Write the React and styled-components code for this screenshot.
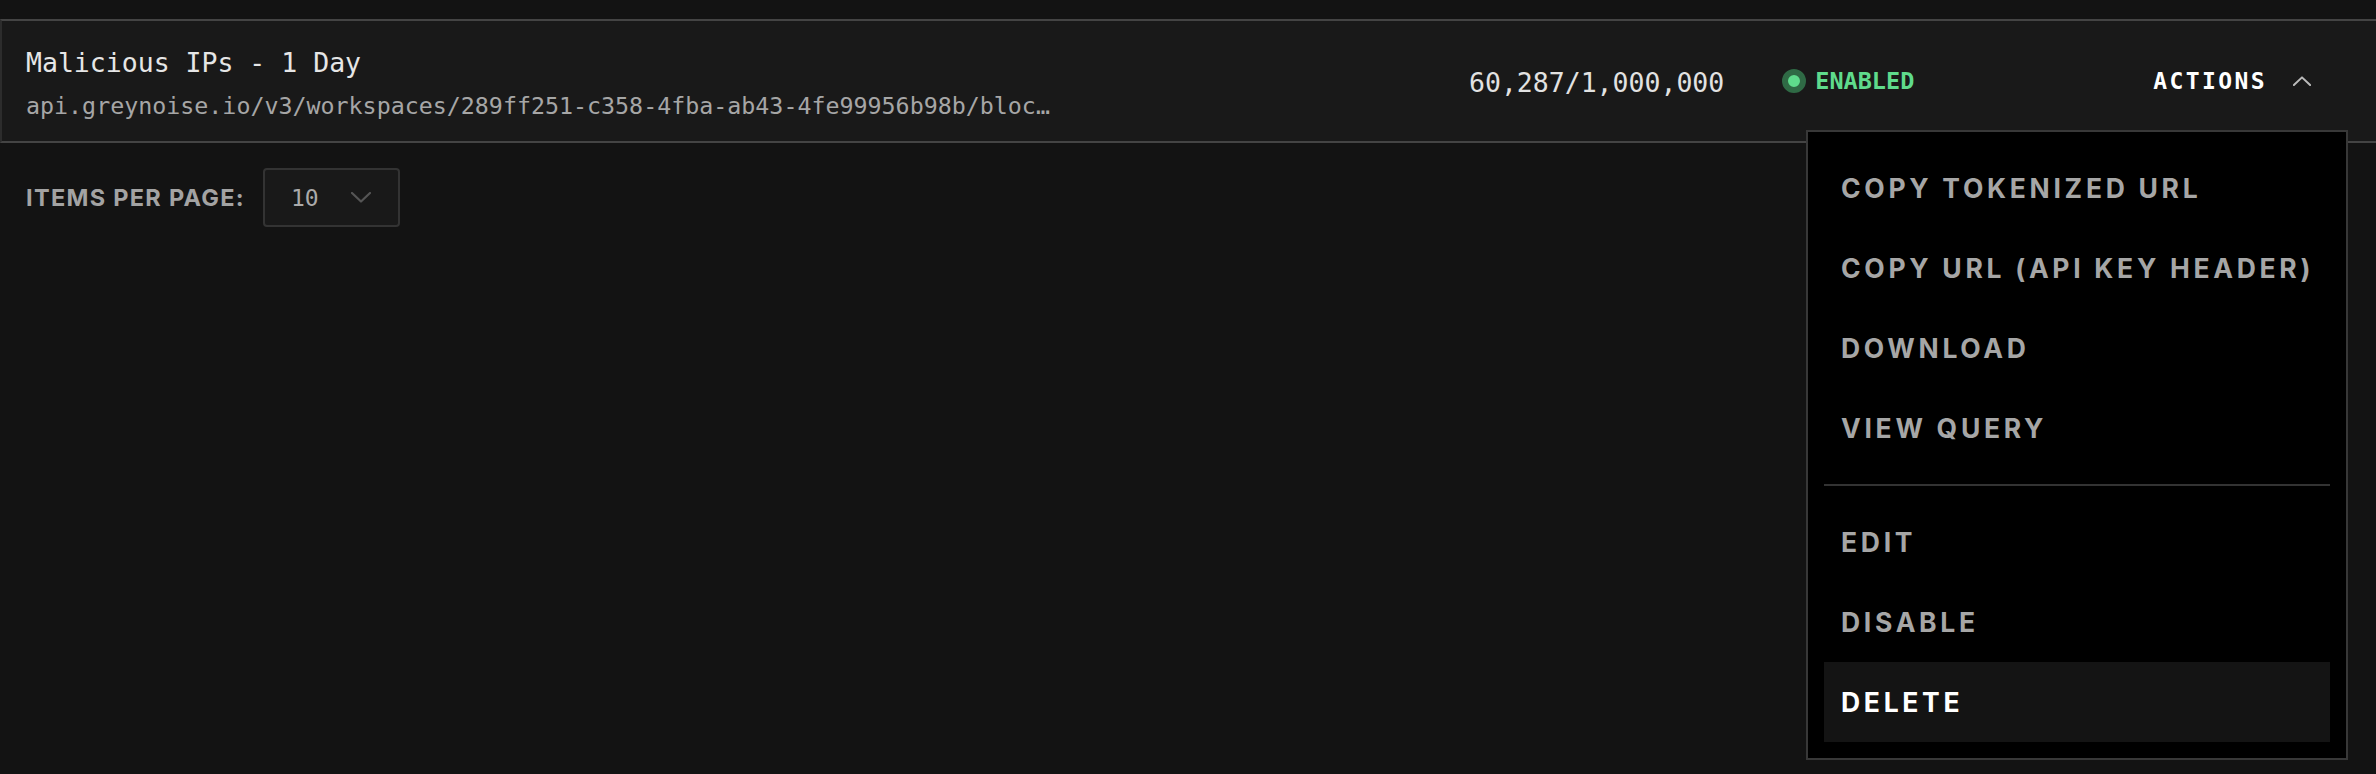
import React from 'react'
import styled, { createGlobalStyle } from 'styled-components'

const GlobalStyle = createGlobalStyle`
  body {
    margin: 0;
    background: #131313;
    font-family: "DejaVu Sans Mono", monospace;
  }
`

const Page = styled.div`
  padding-top: 19px;
  min-height: 755px;
`

const Row = styled.div`
  display: flex;
  align-items: center;
  height: 120px;
  background: #191919;
  border-top: 2px solid #444;
  border-bottom: 2px solid #444;
  border-left: 2px solid #2c2c2c;
`

const Info = styled.div`
  flex: 1;
  display: flex;
  flex-direction: column;
  gap: 13px;
  padding: 5px 0 0 24px;
  min-width: 0;
`

const Title = styled.div`
  font-size: 26.5px;
  line-height: 32px;
  color: #e6e6e6;
`

const Url = styled.div`
  font-size: 23.3px;
  line-height: 28px;
  color: #a6a6a6;
  white-space: nowrap;
  overflow: hidden;
  text-overflow: ellipsis;
  width: 1030px;
`

const Usage = styled.div`
  font-size: 26.5px;
  line-height: 32px;
  color: #e2e2e2;
  margin: 3px 58px 0 0;
`

const Status = styled.div`
  display: flex;
  align-items: center;
  gap: 9px;
  width: 371px;
  font-size: 23.5px;
  font-weight: bold;
  color: #5fdb8c;
`

const Dot = styled.span`
  width: 12px;
  height: 12px;
  border-radius: 50%;
  background: #5fdb8c;
  border: 6px solid #2f6a45;
`

const ActionsWrap = styled.div`
  position: relative;
  margin-right: 65px;
`

const ActionsButton = styled.div`
  display: flex;
  align-items: center;
  gap: 26px;
  font-size: 23px;
  font-weight: bold;
  letter-spacing: 2.4px;
  color: #fff;
`

const Menu = styled.div`
  position: absolute;
  top: 62px;
  right: -37px;
  width: 506px;
  padding: 16px;
  background: #000;
  border: 2px solid #383838;
  font-family: Inter, "Liberation Sans", sans-serif;
`

const Item = styled.div`
  display: flex;
  align-items: center;
  height: 80px;
  padding-left: 17px;
  font-size: 26.5px;
  font-weight: 700;
  letter-spacing: 3.7px;
  color: ${p => (p.active ? '#fff' : '#a6a6a6')};
  background: ${p => (p.active ? '#141414' : 'transparent')};
`

const Divider = styled.div`
  height: 2px;
  margin: 16px 0;
  background: #333;
`

const Footer = styled.div`
  display: flex;
  align-items: center;
  gap: 18px;
  margin-top: 25px;
  padding-left: 26px;
`

const Label = styled.span`
  font-family: Inter, "Liberation Sans", sans-serif;
  font-size: 23.5px;
  font-weight: 700;
  letter-spacing: 1.3px;
  color: #a3a3a3;
`

const Select = styled.div`
  display: flex;
  align-items: center;
  justify-content: space-between;
  box-sizing: border-box;
  width: 137px;
  height: 59px;
  padding: 0 27px 0 26px;
  background: #191919;
  border: 2px solid #333;
  border-radius: 4px;
  font-size: 23px;
  color: #aaa;
`

const Chevron = ({ up, color, w, h }) => (
  <svg width={w} height={h} viewBox="0 0 20 11" fill="none">
    <path
      d={up ? 'M1 10L10 1.5L19 10' : 'M1 1L10 9.5L19 1'}
      stroke={color}
      strokeWidth="2.2"
      strokeLinecap="round"
      strokeLinejoin="round"
    />
  </svg>
)

const items = ['COPY TOKENIZED URL', 'COPY URL (API KEY HEADER)', 'DOWNLOAD', 'VIEW QUERY']
const items2 = ['EDIT', 'DISABLE', 'DELETE']

export default function App() {
  return (
    <Page>
      <GlobalStyle />
      <Row>
        <Info>
          <Title>Malicious IPs - 1 Day</Title>
          <Url>api.greynoise.io/v3/workspaces/289ff251-c358-4fba-ab43-4fe99956b98b/blocklist?format=txt</Url>
        </Info>
        <Usage>60,287/1,000,000</Usage>
        <Status>
          <Dot />
          ENABLED
        </Status>
        <ActionsWrap>
          <ActionsButton>
            ACTIONS
            <Chevron up color="#bbb" w={18} h={10} />
          </ActionsButton>
          <Menu>
            {items.map(t => (
              <Item key={t}>{t}</Item>
            ))}
            <Divider />
            {items2.map(t => (
              <Item key={t} active={t === 'DELETE'}>
                {t}
              </Item>
            ))}
          </Menu>
        </ActionsWrap>
      </Row>
      <Footer>
        <Label>ITEMS PER PAGE:</Label>
        <Select>
          10
          <Chevron color="#555" w={20} h={11} />
        </Select>
      </Footer>
    </Page>
  )
}
